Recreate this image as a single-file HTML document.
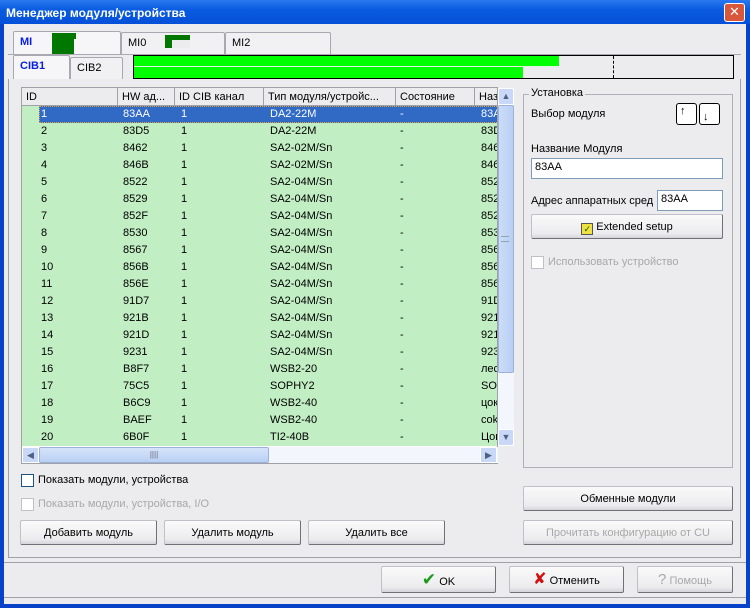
<!DOCTYPE html><html><head><meta charset="utf-8"><style>
*{box-sizing:border-box;margin:0;padding:0}
body{width:750px;height:608px;overflow:hidden;font:11px "Liberation Sans","DejaVu Sans",sans-serif;background:#0842c8;position:relative}
.a{position:absolute}
.win{left:4px;top:24px;width:742px;height:580px;background:#ecebee}
.title{left:0;top:0;width:750px;height:24px;background:linear-gradient(#2a78f0,#0a5be0 40%,#0550d8);color:#fff;font-weight:bold;font-size:12px;padding:6px 0 0 6px}
.close{right:5px;top:3px;width:21px;height:19px;background:#d8563b;border:1px solid #fff;border-radius:3px;color:#fff;font-size:13px;text-align:center;line-height:16px}
.tab{background:#f1f0f3;border:1px solid #a8a8b0;border-bottom:none;border-radius:2px 2px 0 0;padding:4px 6px}
.btn{background:linear-gradient(#fafafa,#ecebee 80%,#d6d5da);border:1px solid #7f9db9;border-color:#c0c0c8 #707078 #707078 #c0c0c8;text-align:center;line-height:24px;border-radius:2px}
.dis{color:#a8a8a8}
.row{position:absolute;left:0;width:476px;height:17px;background:#c2eec4;line-height:17px}
.row span{position:absolute}
.hd{position:absolute;top:0;height:18px;line-height:18px;background:#ecebee;border-right:1px solid #a0a0a8;border-bottom:1px solid #a0a0a8;padding-left:4px;overflow:hidden;white-space:nowrap}
.cb{width:13px;height:13px;border:1px solid #1c5180;background:#fff}
.inp{background:#fff;border:1px solid #7f9db9;padding:2px 3px;height:21px}
</style></head><body>
<div class="a title">Менеджер модуля/устройства</div>
<div class="a close">✕</div>
<div class="a win"></div>
<!-- tabs -->
<div class="a tab" style="left:13px;top:31px;width:108px;height:24px;color:#0a1ee0;font-weight:bold;background:#f6f6f8">MI</div>
<div class="a" style="left:52px;top:33px;width:22px;height:21px;background:#007800"></div>
<div class="a" style="left:74px;top:33px;width:2px;height:6px;background:#007800"></div>
<div class="a tab" style="left:121px;top:32px;width:104px;height:22px">MI0</div>
<div class="a" style="left:165px;top:35px;width:25px;height:13px;background:#007800"></div>
<div class="a" style="left:165px;top:35px;width:25px;height:5px;background:#007800"></div>
<div class="a" style="left:172px;top:40px;width:18px;height:8px;background:#ecebee"></div>
<div class="a" style="left:165px;top:35px;width:7px;height:13px;background:#007800"></div>
<div class="a tab" style="left:225px;top:32px;width:106px;height:22px">MI2</div>
<div class="a" style="left:8px;top:54px;width:733px;height:1px;background:#a8a8b0"></div>
<div class="a tab" style="left:13px;top:55px;width:57px;height:25px;color:#0a1ee0;font-weight:bold;background:#f6f6f8">CIB1</div>
<div class="a tab" style="left:70px;top:57px;width:53px;height:23px">CIB2</div>
<div class="a" style="left:133px;top:55px;width:601px;height:24px;border:1px solid #000;background:#ecebee"></div>
<div class="a" style="left:134px;top:56px;width:425px;height:10px;background:#00ff00"></div>
<div class="a" style="left:134px;top:67px;width:389px;height:11px;background:#00ff00"></div>
<div class="a" style="left:134px;top:66px;width:425px;height:1px;background:#e0f0e0"></div>
<div class="a" style="left:613px;top:56px;width:0;height:22px;border-left:1px dashed #000"></div>
<!-- panel -->
<div class="a" style="left:8px;top:79px;width:733px;height:479px;border:1px solid #a0a0a8;border-top:none;background:#ecebee"></div>
<!-- table -->
<div class="a" style="left:21px;top:87px;width:477px;height:377px;border:1px solid #a0a0a8;background:#fff;overflow:hidden">
<div class="hd" style="left:0;width:96px">ID</div>
<div class="hd" style="left:96px;width:57px">HW ад...</div>
<div class="hd" style="left:153px;width:89px">ID CIB канал</div>
<div class="hd" style="left:242px;width:132px">Тип модуля/устройс...</div>
<div class="hd" style="left:374px;width:79px">Состояние</div>
<div class="hd" style="left:453px;width:30px">Наз</div>
<div id="rows"></div>
</div>
<!-- scrollbars -->
<div class="a" style="left:498px;top:88px;width:16px;height:358px;background:#f3f6fc"></div>
<div class="a" style="left:498px;top:88px;width:16px;height:17px;background:#c8d8f6;border:1px solid #fff;border-radius:2px;text-align:center;font-size:9px;line-height:14px;color:#4d6185">▲</div>
<div class="a" style="left:498px;top:105px;width:16px;height:268px;background:linear-gradient(90deg,#cbdcf8,#b9cff3);border:1px solid #9db2da;border-radius:2px"></div>
<div class="a" style="left:501px;top:236px;width:8px;height:6px;border-top:1px solid #8aa;border-bottom:1px solid #8aa"></div>
<div class="a" style="left:498px;top:429px;width:16px;height:17px;background:#c8d8f6;border:1px solid #fff;border-radius:2px;text-align:center;font-size:9px;line-height:14px;color:#4d6185">▼</div>
<div class="a" style="left:22px;top:447px;width:476px;height:16px;background:#f3f6fc"></div>
<div class="a" style="left:22px;top:447px;width:17px;height:16px;background:#c8d8f6;border:1px solid #fff;text-align:center;font-size:9px;line-height:14px;color:#4d6185">◀</div>
<div class="a" style="left:39px;top:447px;width:230px;height:16px;background:linear-gradient(#d6e4fa,#b9cff3);border:1px solid #9db2da;border-radius:2px;text-align:center;font-size:8px;line-height:14px;color:#667">||||</div>
<div class="a" style="left:480px;top:447px;width:17px;height:16px;background:#c8d8f6;border:1px solid #fff;text-align:center;font-size:9px;line-height:14px;color:#4d6185">▶</div>
<!-- right group -->
<div class="a" style="left:523px;top:94px;width:210px;height:374px;border:1px solid #b0b0b8"></div>
<div class="a" style="left:529px;top:87px;background:#ecebee;padding:0 2px">Установка</div>
<div class="a" style="left:531px;top:108px">Выбор модуля</div>
<div class="a" style="left:676px;top:103px;width:21px;height:22px;border:1px solid #000;border-radius:3px;background:#fff;font-size:11px;padding-left:3px;line-height:14px">↑</div>
<div class="a" style="left:699px;top:103px;width:21px;height:22px;border:1px solid #000;border-radius:3px;background:#fff;font-size:11px;padding-left:3px;line-height:26px">↓</div>
<div class="a" style="left:531px;top:143px">Название Модуля</div>
<div class="a inp" style="left:531px;top:158px;width:192px">83AA</div>
<div class="a" style="left:531px;top:195px">Адрес аппаратных сред</div>
<div class="a inp" style="left:657px;top:190px;width:66px">83AA</div>
<div class="a btn" style="left:531px;top:214px;width:192px;height:25px"><span style="display:inline-block;width:12px;height:12px;background:#f0e040;border:1px solid #555;vertical-align:-2px;font-size:9px;line-height:10px;color:#060">✓</span> Extended setup</div>
<div class="a cb" style="left:531px;top:256px;border-color:#c0c0c8"></div>
<div class="a dis" style="left:548px;top:256px">Использовать устройство</div>
<!-- bottom left -->
<div class="a cb" style="left:21px;top:474px"></div>
<div class="a" style="left:38px;top:474px">Показать модули, устройства</div>
<div class="a cb" style="left:21px;top:498px;border-color:#c0c0c8"></div>
<div class="a dis" style="left:38px;top:498px">Показать модули, устройства, I/O</div>
<div class="a btn" style="left:20px;top:520px;width:137px;height:25px">Добавить модуль</div>
<div class="a btn" style="left:164px;top:520px;width:137px;height:25px">Удалить модуль</div>
<div class="a btn" style="left:308px;top:520px;width:137px;height:25px">Удалить все</div>
<div class="a btn" style="left:523px;top:486px;width:210px;height:25px">Обменные модули</div>
<div class="a btn dis" style="left:523px;top:520px;width:210px;height:25px">Прочитать конфигурацию от CU</div>
<!-- footer -->
<div class="a" style="left:4px;top:562px;width:742px;height:36px;border-top:1px solid #a0a0a8;border-bottom:1px solid #a0a0a8"></div>
<div class="a btn" style="left:381px;top:566px;width:115px;height:27px;line-height:26px"><span style="color:#1a9a1a;font-size:17px;font-weight:bold">✔</span> OK</div>
<div class="a btn" style="left:509px;top:566px;width:115px;height:27px;line-height:26px"><span style="color:#d01010;font-size:16px;font-weight:bold">✘</span> Отменить</div>
<div class="a btn dis" style="left:637px;top:566px;width:96px;height:27px;line-height:26px"><span style="font-size:15px">?</span> Помощь</div>
<script>
var d=[["83AA","DA2-22M","83A"],["83D5","DA2-22M","83D"],["8462","SA2-02M/Sn","846"],["846B","SA2-02M/Sn","846"],["8522","SA2-04M/Sn","852"],["8529","SA2-04M/Sn","852"],["852F","SA2-04M/Sn","852"],["8530","SA2-04M/Sn","853"],["8567","SA2-04M/Sn","856"],["856B","SA2-04M/Sn","856"],["856E","SA2-04M/Sn","856"],["91D7","SA2-04M/Sn","91D"],["921B","SA2-04M/Sn","921"],["921D","SA2-04M/Sn","921"],["9231","SA2-04M/Sn","923"],["B8F7","WSB2-20","лес"],["75C5","SOPHY2","SOF"],["B6C9","WSB2-40","цок"],["BAEF","WSB2-40","cok"],["6B0F","TI2-40B","Цок"]];
var h="";d.forEach(function(r,i){var s=i==0;h+='<div class="row" style="top:'+(18+i*17)+'px">'+(s?'<div style="position:absolute;left:17px;top:0;width:460px;height:17px;background:#316ac5;outline:1px dotted #e0a040;outline-offset:-1px"></div>':'')+'<div style="position:absolute;left:0;top:0;width:476px;height:17px;color:'+(s?'#fff':'#000')+'"><span style="left:19px">'+(i+1)+'</span><span style="left:101px">'+r[0]+'</span><span style="left:159px">1</span><span style="left:248px">'+r[1]+'</span><span style="left:378px">-</span><span style="left:459px">'+r[2]+'</span></div></div>'});
document.getElementById("rows").innerHTML=h;
</script>
</body></html>
